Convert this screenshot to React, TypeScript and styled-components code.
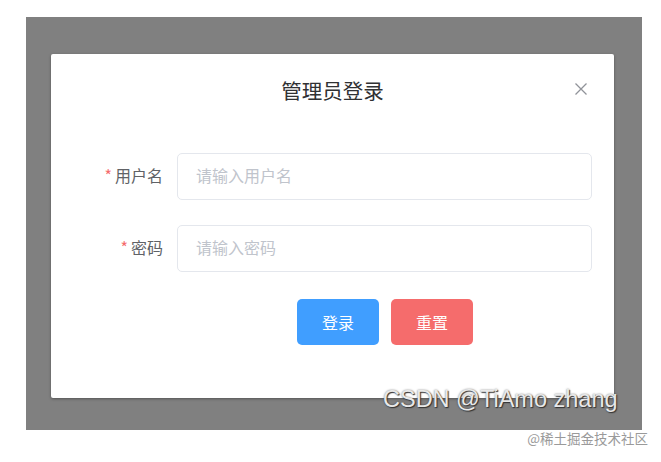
import styled, { createGlobalStyle } from 'styled-components'

const GlobalStyle = createGlobalStyle`
  html, body {
    margin: 0;
    padding: 0;
    background: #ffffff;
  }
  body {
    font-family: 'Liberation Sans', 'Noto Sans CJK SC', sans-serif;
  }
`

const Stage = styled.div`
  width: 661px;
  height: 462px;
  padding: 17px 0 0 26px;
  box-sizing: border-box;
`

const Overlay = styled.div`
  position: relative;
  width: 616px;
  height: 413px;
  box-sizing: border-box;
  padding: 37px 0 0 25px;
  background: #808080;
`

const Dialog = styled.div`
  width: 563px;
  height: 344px;
  box-sizing: border-box;
  background: #ffffff;
  box-shadow: 0 1px 3px rgba(0, 0, 0, 0.35);
  border-radius: 2px;
  display: flex;
  flex-direction: column;
`

const Header = styled.div`
  position: relative;
  height: 72px;
  display: flex;
  align-items: center;
  justify-content: center;
`

const Title = styled.span`
  font-family: 'Noto Sans CJK SC', sans-serif;
  font-size: 20.5px;
  color: #303133;
`

const Close = styled.button`
  position: absolute;
  right: 25px;
  top: 27px;
  width: 16px;
  height: 16px;
  padding: 0;
  border: 0;
  background: none;
  display: flex;
  align-items: center;
  justify-content: center;
`

const Form = styled.form`
  display: flex;
  flex-direction: column;
  gap: 25px;
  padding: 27px 22px 0 0;
`

const Row = styled.div`
  display: flex;
  align-items: center;
`

const Label = styled.label`
  width: 112px;
  padding-right: 14px;
  box-sizing: content-box;
  text-align: right;
  font-family: 'Noto Sans CJK SC', sans-serif;
  font-size: 16px;
  line-height: 20px;
  margin-top: -3px;
  color: #606266;
  &::before {
    content: '*';
    color: #f56c6c;
    margin-right: 3px;
  }
`

const Input = styled.input`
  flex: 1;
  height: 47px;
  box-sizing: border-box;
  padding: 0 18px 3px;
  border: 1px solid #e4e7ed;
  border-radius: 5px;
  font-family: 'Noto Sans CJK SC', sans-serif;
  font-size: 16px;
  color: #606266;
  outline: none;
  &::placeholder {
    color: #c0c4cc;
  }
`

const Actions = styled.div`
  display: flex;
  gap: 12px;
  padding-left: 246px;
  margin-top: 2px;
`

const Button = styled.button<{ $kind: 'primary' | 'danger' }>`
  width: 82px;
  height: 46px;
  border: 0;
  border-radius: 5px;
  padding-bottom: 2px;
  background: ${p => (p.$kind === 'primary' ? '#409eff' : '#f56c6c')};
  color: #ffffff;
  font-family: 'Noto Sans CJK SC', sans-serif;
  font-size: 16px;
`

const Watermark = styled.div`
  position: absolute;
  left: 357px;
  top: 369px;
  font-family: 'Liberation Sans', sans-serif;
  font-size: 23.5px;
  color: #e8e8e8;
  text-shadow: 1px 1px 1px #333333, 0 0 2px rgba(0, 0, 0, 0.5);
  white-space: nowrap;
`

const Footer = styled.div`
  display: flex;
  justify-content: flex-end;
  padding: 0 13px 0 0;
  line-height: 16px;
  font-family: 'Noto Sans CJK SC', sans-serif;
  font-size: 13.5px;
  color: #9a9a9a;
`

const CloseIcon = () => (
  <svg width="14" height="14" viewBox="0 0 14 14">
    <path d="M1.5 1.5 L12.5 12.5 M12.5 1.5 L1.5 12.5" stroke="#909399" strokeWidth="1.3" fill="none" />
  </svg>
)

const App = () => {
  return (
    <>
      <GlobalStyle />
      <Stage>
        <Overlay>
          <Dialog>
            <Header>
              <Title>管理员登录</Title>
              <Close type="button"><CloseIcon /></Close>
            </Header>
            <Form onSubmit={e => e.preventDefault()}>
              <Row>
                <Label>用户名</Label>
                <Input placeholder="请输入用户名" />
              </Row>
              <Row>
                <Label>密码</Label>
                <Input type="password" placeholder="请输入密码" />
              </Row>
              <Actions>
                <Button $kind="primary">登录</Button>
                <Button $kind="danger">重置</Button>
              </Actions>
            </Form>
          </Dialog>
          <Watermark>CSDN @TiAmo zhang</Watermark>
        </Overlay>
        <Footer>@稀土掘金技术社区</Footer>
      </Stage>
    </>
  )
}

export default App
